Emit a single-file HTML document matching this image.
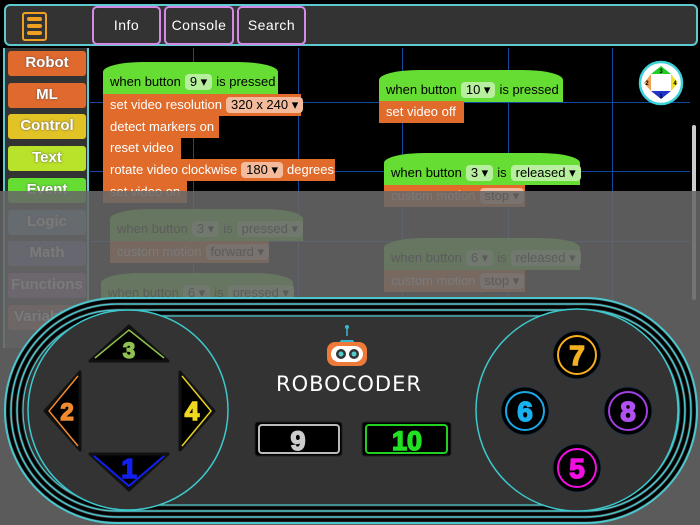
<!DOCTYPE html>
<html><head><meta charset="utf-8"><style>
*{margin:0;padding:0;box-sizing:border-box}
body{width:700px;height:525px;overflow:hidden;background:#000;font-family:"Liberation Sans",sans-serif;position:relative}
.a{position:absolute}
.top{left:4px;top:4px;width:694px;height:42px;background:#333;border:2px solid #5fc9cf;border-radius:6px}
.tb{top:6px;height:39px;border:2px solid #d58be6;border-radius:5px;background:#333;color:#fff;font-size:14px;letter-spacing:.5px;text-align:center;line-height:35px}
.side{left:3px;top:48px;width:86px;height:300px;background:#333;border-right:2px solid #5fc9cf;border-left:2px solid #5fc9cf}
.cat{left:8px;width:78px;height:25px;border-radius:3px;color:#fff;font-weight:bold;font-size:15px;text-align:center;line-height:24px;text-shadow:0 0 2px #555}
.g{background:#000}
.vl{width:1px;background:#1447a0;top:48px;height:260px}
.hl{height:1px;background:#1447a0;left:90px;width:600px}
.b{height:22px;color:#fff;font-size:13px;line-height:22px;padding-left:7px;white-space:nowrap}
.o{background:#e06b2b}
.gr{background:#66dd33;color:#000}
.hat{border-radius:40px 40px 0 0/10px 10px 0 0}
.f{display:inline-block;padding:0 5px;border-radius:4px;line-height:16px;margin:0 4px}
.o .f{background:#f3bb9c;color:#000}
.gr .f{background:#b7ef9f}
.ov{left:0;top:191px;width:700px;height:334px;background:rgba(104,104,104,.88)}
</style></head><body>
<div class="a g" style="left:90px;top:48px;width:610px;height:300px"></div>
<div class="a vl" style="left:193px"></div><div class="a vl" style="left:298px"></div><div class="a vl" style="left:402px"></div><div class="a vl" style="left:508px"></div><div class="a vl" style="left:612px"></div>
<div class="a hl" style="top:102px"></div><div class="a hl" style="top:171px"></div><div class="a hl" style="top:241px"></div>
<div class="a top"></div>
<div class="a" style="left:22px;top:12px;width:25px;height:29px;border:2px solid #f0a020;border-radius:3px"></div>
<div class="a" style="left:27px;top:17px;width:15px;height:4px;background:#f0a020;border-radius:2px"></div>
<div class="a" style="left:27px;top:24px;width:15px;height:4px;background:#f0a020;border-radius:2px"></div>
<div class="a" style="left:27px;top:31px;width:15px;height:4px;background:#f0a020;border-radius:2px"></div>
<div class="a tb" style="left:92px;width:69px">Info</div>
<div class="a tb" style="left:164px;width:70px">Console</div>
<div class="a tb" style="left:237px;width:69px">Search</div>
<div class="a side"></div>
<div class="a cat" style="top:51px;background:#e0692d">Robot</div>
<div class="a cat" style="top:83px;background:#e0692d">ML</div>
<div class="a cat" style="top:114px;background:#e2c325">Control</div>
<div class="a cat" style="top:146px;background:#b9e22a">Text</div>
<div class="a cat" style="top:178px;background:#66dd33">Event</div>
<div class="a cat" style="top:210px;background:#5b80a5">Logic</div>
<div class="a cat" style="top:241px;background:#5b67a5">Math</div>
<div class="a cat" style="top:273px;background:#995ba5">Functions</div>
<div class="a cat" style="top:305px;background:#a55b5b">Variables</div>

<div class="a b gr hat" style="left:103px;top:62px;width:175px;height:33px;padding-top:9px">when button<span class="f">9 ▾</span>is pressed</div>
<div class="a b o" style="left:103px;top:94px;width:198px">set video resolution<span class="f">320 x 240 ▾</span></div>
<div class="a b o" style="left:103px;top:116px;width:116px">detect markers on</div>
<div class="a b o" style="left:103px;top:137px;width:78px">reset video</div>
<div class="a b o" style="left:103px;top:159px;width:232px">rotate video clockwise<span class="f">180 ▾</span>degrees</div>
<div class="a b o" style="left:103px;top:181px;width:84px">set video on</div>
<div class="a b gr hat" style="left:379px;top:70px;width:184px;height:32px;padding-top:9px">when button<span class="f">10 ▾</span>is pressed</div>
<div class="a b o" style="left:379px;top:101px;width:85px">set video off</div>
<div class="a b gr hat" style="left:384px;top:153px;width:196px;height:32px;padding-top:9px">when button<span class="f">3 ▾</span>is<span class="f">released ▾</span></div>
<div class="a b o" style="left:384px;top:185px;width:141px">custom motion<span class="f">stop ▾</span></div>
<div class="a b gr hat" style="left:110px;top:209px;width:193px;height:32px;padding-top:9px">when button<span class="f">3 ▾</span>is<span class="f">pressed ▾</span></div>
<div class="a b o" style="left:110px;top:241px;width:159px">custom motion<span class="f">forward ▾</span></div>
<div class="a b gr hat" style="left:101px;top:273px;width:192px;height:32px;padding-top:9px">when button<span class="f">6 ▾</span>is<span class="f">pressed ▾</span></div>
<div class="a b gr hat" style="left:384px;top:238px;width:196px;height:32px;padding-top:9px">when button<span class="f">6 ▾</span>is<span class="f">released ▾</span></div>
<div class="a b o" style="left:384px;top:270px;width:141px">custom motion<span class="f">stop ▾</span></div>

<svg class="a" style="left:637px;top:59px" width="48" height="48" viewBox="0 0 48 48">
<circle cx="24" cy="24" r="21" fill="#fff" stroke="#3cd0d8" stroke-width="2.5"/>
<polygon points="14,15 34,15 24,7" fill="#22cc22"/><polygon points="14,32 34,32 24,40" fill="#2233cc"/>
<polygon points="14,15 14,32 7,24" fill="#f0a050"/><polygon points="34,15 34,32 41,24" fill="#f0e020"/>
<rect x="14" y="15" width="20" height="17" fill="#fff"/>
<text x="24" y="14" font-size="6" font-weight="bold" text-anchor="middle">3</text><text x="24" y="39" font-size="6" font-weight="bold" text-anchor="middle">1</text>
<text x="10" y="26" font-size="6" font-weight="bold" text-anchor="middle">2</text><text x="38" y="26" font-size="6" font-weight="bold" text-anchor="middle">4</text>
</svg>
<div class="a" style="left:692px;top:125px;width:4px;height:175px;background:#ccc;border-radius:2px"></div>

<div class="a ov"></div>

<svg class="a" style="left:0;top:0" width="700" height="525" viewBox="0 0 700 525">
<rect x="5" y="298" width="692" height="225" rx="112" fill="#333" stroke="#4cc6cc" stroke-width="2"/>
<rect x="8" y="301" width="686" height="219" rx="109" fill="none" stroke="#000" stroke-width="3"/>
<rect x="11" y="304" width="680" height="213" rx="106" fill="none" stroke="#4cc6cc" stroke-width="1.5"/>
<rect x="14" y="307" width="674" height="207" rx="103" fill="none" stroke="#000" stroke-width="3"/>
<rect x="17" y="310" width="668" height="201" rx="100" fill="none" stroke="#4cc6cc" stroke-width="1.5"/>
<rect x="20" y="313" width="662" height="195" rx="97" fill="none" stroke="#000" stroke-width="3"/>
<rect x="23" y="316" width="656" height="189" rx="94" fill="#333" stroke="#4cc6cc" stroke-width="1.2"/>
<circle cx="128" cy="410" r="100" fill="#333" stroke="#3cc8cc" stroke-width="1.5"/>
<circle cx="577" cy="410" r="101" fill="#333" stroke="#3cc8cc" stroke-width="1.5"/>
<g stroke-linejoin="round">
<polygon points="90,361 168,361 129,326" fill="#000" stroke="#111" stroke-width="3"/>
<polyline points="95,358 129,330 164,358" fill="none" stroke="#8fc050" stroke-width="1.5"/>
<polygon points="90,454 168,454 129,490" fill="#000" stroke="#111" stroke-width="3"/>
<polyline points="94,456 129,486 164,456" fill="none" stroke="#1020f0" stroke-width="2"/>
<polygon points="80,372 80,450 45,411" fill="#000" stroke="#111" stroke-width="3"/>
<polyline points="78,376 49,411 78,446" fill="none" stroke="#f08a30" stroke-width="1.5"/>
<polygon points="180,372 180,450 214,411" fill="#000" stroke="#111" stroke-width="3"/>
<polyline points="182,376 211,411 182,446" fill="none" stroke="#e8d020" stroke-width="1.5"/>
</g>
<g font-family="Liberation Sans" font-weight="bold" text-anchor="middle" stroke-width="1.5">
<text x="129" y="358" font-size="22" fill="#8fc050" stroke="#8fc050">3</text>
<text x="129" y="478" font-size="28" fill="#1020f0" stroke="#1020f0">1</text>
<text x="67" y="420" font-size="24" fill="#f08a30" stroke="#f08a30">2</text>
<text x="192" y="420" font-size="26" fill="#f0d820" stroke="#f0d820">4</text>
</g>
<g>
<circle cx="577" cy="355" r="24" fill="#000" stroke="#234" stroke-width="1"/><circle cx="577" cy="355" r="19" fill="none" stroke="#f4b020" stroke-width="2"/>
<circle cx="525" cy="411" r="24" fill="#000" stroke="#234"/><circle cx="525" cy="411" r="19" fill="none" stroke="#19a8e8" stroke-width="2"/>
<circle cx="628" cy="411" r="24" fill="#000" stroke="#234"/><circle cx="628" cy="411" r="19" fill="none" stroke="#a040e0" stroke-width="2"/>
<circle cx="577" cy="468" r="24" fill="#000" stroke="#234"/><circle cx="577" cy="468" r="19" fill="none" stroke="#f010e0" stroke-width="2"/>
</g>
<g font-family="Liberation Sans" font-weight="bold" text-anchor="middle" font-size="28" stroke-width="1.5">
<text x="577" y="365" fill="#f4b020" stroke="#f4b020">7</text><text x="525" y="421" fill="#19b0f0" stroke="#19b0f0">6</text>
<text x="628" y="421" fill="#b050f0" stroke="#b050f0">8</text><text x="577" y="478" fill="#f010e0" stroke="#f010e0">5</text>
</g>
<line x1="347" y1="327" x2="347" y2="336" stroke="#3ab8d0" stroke-width="1.5"/><circle cx="347" cy="327" r="2" fill="#3ab8d0"/>
<path d="M341 340 h12 l2 3 h-16z" fill="#3ab8d0"/>
<rect x="327" y="342" width="40" height="24" rx="8" fill="#ee7a3a"/>
<rect x="331" y="346" width="32" height="16" rx="8" fill="#fff"/>
<circle cx="341" cy="354" r="5" fill="#333"/><circle cx="341" cy="354" r="2.5" fill="#5cc"/>
<circle cx="354" cy="354" r="5" fill="#333"/><circle cx="354" cy="354" r="2.5" fill="#5cc"/>
<text x="349" y="391" font-family="DejaVu Sans" font-size="21" fill="#fff" text-anchor="middle" letter-spacing="1" textLength="146" lengthAdjust="spacingAndGlyphs">ROBOCODER</text>
<rect x="255" y="422" width="87" height="34" rx="3" fill="#000" stroke="#222"/>
<rect x="259" y="425" width="80" height="28" rx="3" fill="none" stroke="#bbb" stroke-width="2"/>
<text x="298" y="450" font-family="Liberation Sans" font-weight="bold" font-size="27" fill="#ccc" stroke="#ccc" stroke-width="1.5" text-anchor="middle">9</text>
<rect x="362" y="422" width="89" height="34" rx="3" fill="#000" stroke="#222"/>
<rect x="366" y="425" width="81" height="28" rx="3" fill="none" stroke="#22d022" stroke-width="2"/>
<text x="407" y="450" font-family="Liberation Sans" font-weight="bold" font-size="27" fill="#22e022" stroke="#22e022" stroke-width="1.5" text-anchor="middle">10</text>
</svg>
</body></html>
